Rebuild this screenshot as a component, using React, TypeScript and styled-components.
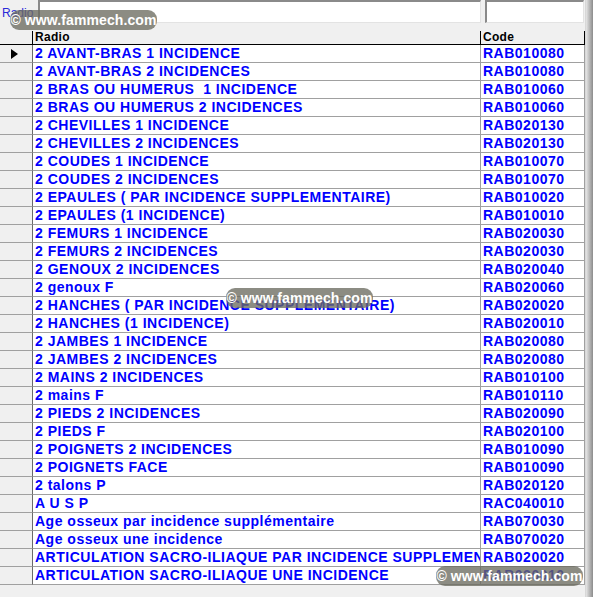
import React from 'react';
import styled, { createGlobalStyle } from 'styled-components';

// grid de recherche "Radio" avec filtres en haut

const GlobalStyle = createGlobalStyle`
  html, body {
    margin: 0;
    padding: 0;
    background: #f0f0f0;
    font-family: 'Liberation Sans', Arial, sans-serif;
  }
`;

const Screen = styled.div({
  position: 'relative',
  display: 'flex',
  width: '593px',
  height: '597px',
  overflow: 'hidden',
  background: '#f0f0f0',
});

const Main = styled.div({
  display: 'flex',
  flexDirection: 'column',
  width: '585px',
});

const FrameEdge = styled.div({
  width: '8px',
  borderLeft: '1px solid #d8d8d8',
  background: 'linear-gradient(90deg, #e6e6e6 0%, #bdbdbd 45%, #8c8c8c 100%)',
});

const FilterBar = styled.div({
  display: 'flex',
  alignItems: 'flex-start',
  height: '31px',
  boxSizing: 'border-box',
});

const FilterLabel = styled.label({
  width: '36px',
  paddingLeft: '2px',
  paddingTop: '6px',
  fontSize: '12px',
  color: '#2a2ad8',
});

const FilterInput = styled.input<{ $width: number; $gap?: number }>(p => ({
  width: `${p.$width}px`,
  height: '23px',
  marginLeft: `${p.$gap || 0}px`,
  boxSizing: 'border-box',
  padding: 0,
  background: '#fff',
  borderTop: '2px solid #8a8a8a',
  borderLeft: '2px solid #8a8a8a',
  borderRight: '1px solid #e3e3e3',
  borderBottom: '1px solid #e3e3e3',
  outline: 'none',
}));

const Grid = styled.div({
  display: 'flex',
  flexDirection: 'column',
});

const cols = '33px 448px 104px';

const HeaderRow = styled.div({
  display: 'grid',
  gridTemplateColumns: cols,
  height: '14px',
  boxSizing: 'border-box',
  borderBottom: '1px solid #000',
});

const HeaderCell = styled.div({
  boxSizing: 'border-box',
  borderRight: '1px solid #000',
  paddingLeft: '2px',
  fontSize: '12px',
  lineHeight: '13px',
  letterSpacing: '0.3px',
  fontWeight: 'bold',
  color: '#000',
  overflow: 'hidden',
  whiteSpace: 'nowrap',
  background: '#f0f0f0',
});

const Row = styled.div({
  display: 'grid',
  gridTemplateColumns: cols,
  height: '18px',
});

const Selector = styled.div({
  display: 'flex',
  alignItems: 'center',
  boxSizing: 'border-box',
  background: '#f0f0f0',
  borderRight: '1px solid #6a6a6a',
  borderBottom: '1px solid #a0a0a0',
  paddingLeft: '11px',
});

const Arrow = styled.span({
  width: 0,
  height: 0,
  borderTop: '5px solid transparent',
  borderBottom: '5px solid transparent',
  borderLeft: '7px solid #000',
});

const Cell = styled.div({
  boxSizing: 'border-box',
  background: '#fff',
  borderRight: '1px solid #a0a0a0',
  borderBottom: '1px solid #a0a0a0',
  paddingLeft: '2px',
  fontSize: '14px',
  lineHeight: '17px',
  letterSpacing: '0.5px',
  fontWeight: 'bold',
  color: '#0000ff',
  overflow: 'hidden',
  whiteSpace: 'pre',
});

const Watermark = styled.div<{ $top: number; $left: number }>(p => ({
  position: 'absolute',
  top: `${p.$top}px`,
  left: `${p.$left}px`,
  width: '147px',
  height: '20px',
  borderRadius: '9px',
  background: 'rgba(108, 108, 96, 0.78)',
  color: '#fff',
  fontSize: '14px',
  fontWeight: 'bold',
  letterSpacing: '0.1px',
  lineHeight: '20px',
  textAlign: 'center',
  whiteSpace: 'nowrap',
}));

const rows: [string, string][] = [
  ['2 AVANT-BRAS 1 INCIDENCE', 'RAB010080'],
  ['2 AVANT-BRAS 2 INCIDENCES', 'RAB010080'],
  ['2 BRAS OU HUMERUS  1 INCIDENCE', 'RAB010060'],
  ['2 BRAS OU HUMERUS 2 INCIDENCES', 'RAB010060'],
  ['2 CHEVILLES 1 INCIDENCE', 'RAB020130'],
  ['2 CHEVILLES 2 INCIDENCES', 'RAB020130'],
  ['2 COUDES 1 INCIDENCE', 'RAB010070'],
  ['2 COUDES 2 INCIDENCES', 'RAB010070'],
  ['2 EPAULES ( PAR INCIDENCE SUPPLEMENTAIRE)', 'RAB010020'],
  ['2 EPAULES (1 INCIDENCE)', 'RAB010010'],
  ['2 FEMURS 1 INCIDENCE', 'RAB020030'],
  ['2 FEMURS 2 INCIDENCES', 'RAB020030'],
  ['2 GENOUX 2 INCIDENCES', 'RAB020040'],
  ['2 genoux F', 'RAB020060'],
  ['2 HANCHES ( PAR INCIDENCE SUPPLEMENTAIRE)', 'RAB020020'],
  ['2 HANCHES (1 INCIDENCE)', 'RAB020010'],
  ['2 JAMBES 1 INCIDENCE', 'RAB020080'],
  ['2 JAMBES 2 INCIDENCES', 'RAB020080'],
  ['2 MAINS 2 INCIDENCES', 'RAB010100'],
  ['2 mains F', 'RAB010110'],
  ['2 PIEDS 2 INCIDENCES', 'RAB020090'],
  ['2 PIEDS F', 'RAB020100'],
  ['2 POIGNETS 2 INCIDENCES', 'RAB010090'],
  ['2 POIGNETS FACE', 'RAB010090'],
  ['2 talons P', 'RAB020120'],
  ['A U S P', 'RAC040010'],
  ['Age osseux par incidence supplémentaire', 'RAB070030'],
  ['Age osseux une incidence', 'RAB070020'],
  ['ARTICULATION SACRO-ILIAQUE PAR INCIDENCE SUPPLEMENTAIRE', 'RAB020020'],
  ['ARTICULATION SACRO-ILIAQUE UNE INCIDENCE', 'RAB020010'],
];

const mark = '\u00A9 www.fammech.com';

export default function App() {
  return (
    <Screen>
      <GlobalStyle />
      <Main>
        <FilterBar>
          <FilterLabel>Radio</FilterLabel>
          <FilterInput $width={443} />
          <FilterInput $width={99} $gap={4} />
        </FilterBar>
        <Grid>
          <HeaderRow>
            <HeaderCell />
            <HeaderCell>Radio</HeaderCell>
            <HeaderCell>Code</HeaderCell>
          </HeaderRow>
          {rows.map(([label, code], i) => (
            <Row key={i}>
              <Selector>{i === 0 ? <Arrow /> : null}</Selector>
              <Cell>{label}</Cell>
              <Cell>{code}</Cell>
            </Row>
          ))}
        </Grid>
      </Main>
      <FrameEdge />
      <Watermark $top={10} $left={10}>{mark}</Watermark>
      <Watermark $top={288} $left={226}>{mark}</Watermark>
      <Watermark $top={566} $left={436}>{mark}</Watermark>
    </Screen>
  );
}
